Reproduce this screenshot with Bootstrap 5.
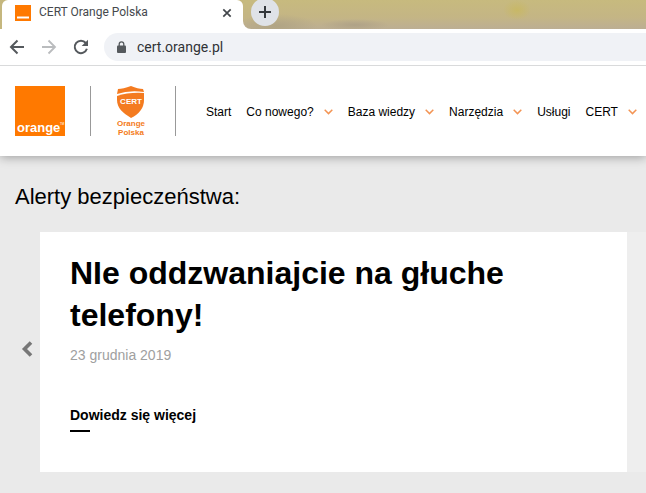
<!DOCTYPE html>
<html lang="pl">
<head>
<meta charset="utf-8">
<meta name="viewport" content="width=device-width, initial-scale=1">
<title>CERT Orange Polska</title>
<link href="https://cdn.jsdelivr.net/npm/bootstrap@5.3.0/dist/css/bootstrap.min.css" rel="stylesheet">
<style>
body{font-family:"Liberation Sans",Arial,sans-serif;background:#eaeaea;color:#000;line-height:1.2}
button{border:0;background:none;padding:0;display:flex;align-items:center;justify-content:center;flex:none}
svg{display:block;flex:none}
.chrome{font-family:Roboto,"Segoe UI",sans-serif;background:#fff;position:relative;z-index:1}
.strip{height:29px;padding-left:2px;background:#c5b77e}
.tab{width:241px;padding:0 11px 4px 13px;background:#fff;gap:8px;font-size:12px;color:#45494d}
.scenery{padding-left:8px;border-bottom-left-radius:8px;background:radial-gradient(ellipse 14px 10px at 274px 10px,#c8b866,transparent),radial-gradient(ellipse 34px 6px at 112px 25px,#afa287,transparent),radial-gradient(ellipse 40px 12px at 34px 26px,#b0a484,transparent),linear-gradient(#c7ba7e,#c4b585 60%,#bcae93)}
.corner{background:#fff}
.newtab{width:28px;height:28px;margin-top:-2px;border-radius:50%;background:#dfe2e7}
.toolbar{height:37px;padding-left:9px;gap:16px;border-bottom:1px solid #d9dadb}
.omni{height:28px;margin-left:-1px;padding-left:13px;gap:11px;background:#f0f2f6;border-radius:14px 0 0 14px;font-size:14px;color:#303337}
.sitehead{height:90px;padding-left:15px;background:#fff;box-shadow:0 1px 10px rgba(0,0,0,.35)}
.rule{width:1px;height:50px;margin-left:25px;background:#999;flex:none}
.certlogo{margin:0 3px 0 23px}
.menu{margin-left:30px;padding-top:2px;gap:15px;font-size:12px;white-space:nowrap}
.menu a{color:#000;text-decoration:none;display:flex;align-items:center;gap:10px}
.alerts{padding:28px 0 21px}
.alerts h1{font-size:22px;line-height:26px;margin:0 0 22px 15px}
.prev{width:40px;padding:0 0 6px 13px}
.slide{height:240px;padding:20px 30px;background:#fff}
.slide h2{font-size:32px;line-height:42px;font-weight:700;margin:0 0 10px}
.date{font-size:14px;line-height:18px;color:#a0a0a0;margin-bottom:42px}
.more{font-size:14px;line-height:18px;font-weight:700;color:#000;text-decoration:none}
.more::after{content:"";display:block;width:20px;height:2px;margin-top:6px;background:#000}
.nextslide{width:19px;background:#eee}
</style>
</head>
<body>
<div class="chrome">
  <div class="strip d-flex">
    <div class="tab d-flex align-items-center rounded-top">
      <svg width="16" height="16" viewBox="0 0 16 16"><path fill="#ff7900" d="M0 0h16v16H0z"/><path fill="#fff" d="M2 11.500h12v2H2z"/></svg>
      <span class="flex-grow-1">CERT Orange Polska</span>
      <button type="button" aria-label="Zamknij kartę"><svg width="10" height="10" viewBox="0 0 10 10" stroke="#43474b" stroke-width="1.700"><path d="M1.300 1.300l7.400 7.400M8.700 1.300L1.300 8.700"/></svg></button>
    </div>
    <div class="corner flex-grow-1 d-flex"><div class="scenery flex-grow-1">
      <button type="button" class="newtab" aria-label="Nowa karta"><svg width="12" height="12" viewBox="0 0 12 12" stroke="#34383c" stroke-width="2"><path d="M6 0v12M0 6h12"/></svg></button>
    </div></div>
  </div>
  <div class="toolbar d-flex align-items-center">
    <button type="button" aria-label="Wstecz"><svg width="16" height="16" viewBox="0 0 16 16" fill="none" stroke="#55595d" stroke-width="2"><path d="M15 8H2M8.500 1.500L2 8l6.500 6.500"/></svg></button>
    <button type="button" aria-label="Dalej"><svg width="16" height="16" viewBox="0 0 16 16" fill="none" stroke="#babcbe" stroke-width="1.800"><path d="M1 8h13M7.500 1.500L14 8l-6.500 6.500"/></svg></button>
    <button type="button" aria-label="Odśwież"><svg width="16" height="16" viewBox="0 0 16 16"><path fill="none" stroke="#55595d" stroke-width="2" d="M13.900 9.800A6.200 6.200 0 1 1 12.800 4"/><path fill="#55595d" d="M15 .7V7H8.700z"/></svg></button>
    <div class="omni d-flex align-items-center flex-grow-1">
      <svg width="9" height="13" viewBox="0 0 9 13"><rect y="4.500" width="9" height="7.500" rx="1" fill="#55595d"/><path d="M2.200 5V3.200a2.300 2.300 0 0 1 4.600 0V5" fill="none" stroke="#55595d" stroke-width="1.300"/></svg>
      <span>cert.orange.pl</span>
    </div>
  </div>
</div>
<header class="sitehead d-flex align-items-center">
  <a href="#" aria-label="Orange"><svg width="50" height="50" viewBox="0 0 50 50"><path fill="#ff7900" d="M0 0h50v50H0z"/><text x="2" y="46" font-size="13" font-weight="700" fill="#fff">orange</text><text x="45" y="39" font-size="3" fill="#fff">TM</text></svg></a>
  <span class="rule"></span>
  <a href="#" class="certlogo" aria-label="CERT Orange Polska"><svg width="33" height="52" viewBox="0 0 33 52" fill="#f47b20"><path d="M4 4Q9 4 17 1q7 3 12 3l1 3Q15 5 3 9z"/><path d="M3 11Q15 7 30 8v7c0 8-5 14-13 18C9 28 3 23 3 15z"/><g text-anchor="middle" font-size="8" font-weight="700"><text x="17" y="19" fill="#fff">CERT</text><text x="17" y="41">Orange</text><text x="17" y="50">Polska</text></g></svg></a>
  <span class="rule"></span>
  <nav class="menu d-flex" aria-label="Główne menu">
    <a href="#">Start</a>
    <a href="#">Co nowego?<svg width="9" height="6" viewBox="0 0 9 6" fill="none" stroke="#f39454" stroke-width="1.500"><path d="M.7.800l3.800 3.800L8.300.8"/></svg></a>
    <a href="#">Baza wiedzy<svg width="9" height="6" viewBox="0 0 9 6" fill="none" stroke="#f39454" stroke-width="1.500"><path d="M.7.800l3.800 3.800L8.300.8"/></svg></a>
    <a href="#">Narzędzia<svg width="9" height="6" viewBox="0 0 9 6" fill="none" stroke="#f39454" stroke-width="1.500"><path d="M.7.800l3.800 3.800L8.300.8"/></svg></a>
    <a href="#">Usługi</a>
    <a href="#">CERT<svg width="9" height="6" viewBox="0 0 9 6" fill="none" stroke="#f39454" stroke-width="1.500"><path d="M.7.800l3.800 3.800L8.300.8"/></svg></a>
  </nav>
</header>
<main class="alerts">
  <h1 class="fw-normal">Alerty bezpieczeństwa:</h1>
  <div class="d-flex">
    <button type="button" class="prev" aria-label="Poprzedni"><svg width="12" height="16" viewBox="0 0 12 16" fill="none" stroke="#777" stroke-width="3.600"><path d="M10 1.500L3.500 8l6.500 6.500"/></svg></button>
    <article class="slide flex-grow-1">
      <h2>NIe oddzwaniajcie na głuche telefony!</h2>
      <p class="date">23 grudnia 2019</p>
      <a class="more d-block" href="#">Dowiedz się więcej</a>
    </article>
    <div class="nextslide flex-shrink-0"></div>
  </div>
</main>
<script src="https://cdn.jsdelivr.net/npm/bootstrap@5.3.0/dist/js/bootstrap.bundle.min.js"></script>
</body>
</html>
